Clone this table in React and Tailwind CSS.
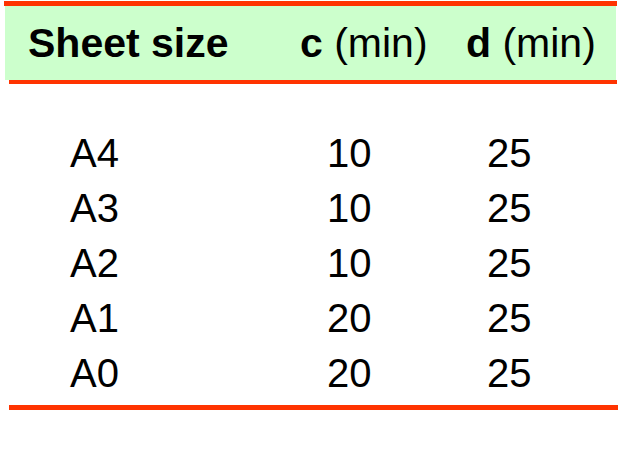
import React from 'react';

const rows = [
  ['A4', '10', '25'],
  ['A3', '10', '25'],
  ['A2', '10', '25'],
  ['A1', '20', '25'],
  ['A0', '20', '25'],
];

const App = () => {
  return (
    <div className="w-[621px] h-[463px] bg-white text-black font-['Liberation_Sans',Arial,sans-serif]">
      <div className="pt-[1px] pl-[4px] pr-[4px]">
        <div className="h-[5px] bg-[#ff3300]" />
      </div>
      <div className="ml-[5px] mr-[5px] h-[74px] bg-[#ccffcc] flex items-center pl-[23px] text-[41px] leading-none">
        <span className="w-[272px] font-bold">Sheet size</span>
        <span className="w-[166px]">
          <b>c</b> (min)
        </span>
        <span>
          <b>d</b> (min)
        </span>
      </div>
      <div className="ml-[9px] mr-[4px] h-[4px] bg-[#ff3300]" />

      <div className="mt-[42px] text-[40px] leading-[55px]">
        {rows.map(([size, c, d]) => (
          <div key={size} className="flex">
            <span className="w-[327px] pl-[70px]">{size}</span>
            <span className="w-[160px]">{c}</span>
            <span>{d}</span>
          </div>
        ))}
      </div>
      <div className="mt-[4px] ml-[9px] mr-[3px] h-[5px] bg-[#ff3300]" />
    </div>
  );
};

export default App;
